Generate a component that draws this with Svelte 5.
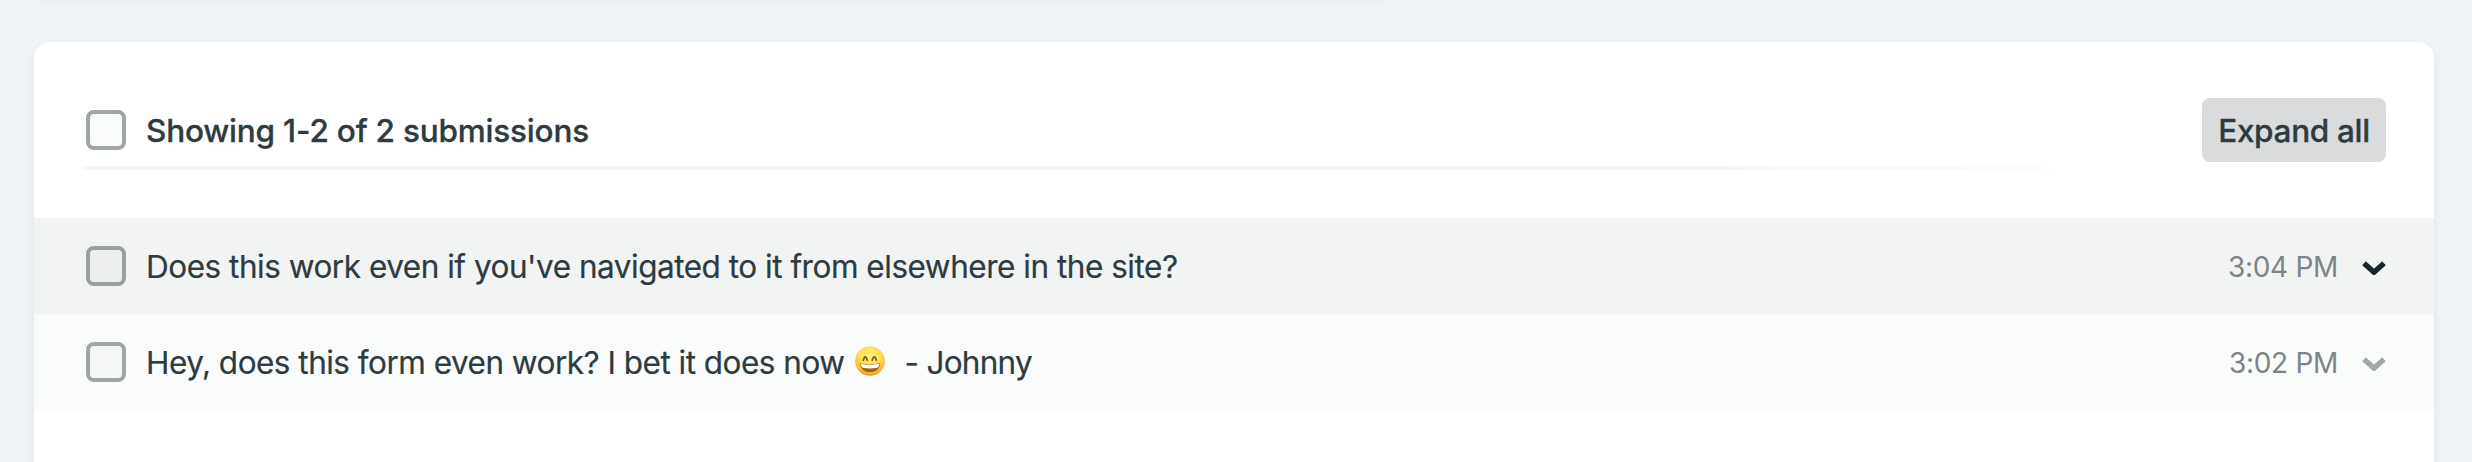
<script>
  const submissions = [
    { id: 1, before: "Does this work even if you've navigated to it from elsewhere in the site?", time: '3:04 PM', active: true },
    { id: 2, before: 'Hey, does this form even work? I bet it does now', after: '- Johnny', smile: true, time: '3:02 PM', active: false }
  ];
</script>

<div class="page">
  <div class="toolbar-card"></div>
  <section class="card">
    <header>
      <span class="box"></span>
      <h1>Showing 1-2 of 2 submissions</h1>
      <button>Expand all</button>
    </header>
    <div class="rule"></div>
    <div class="list">
      {#each submissions as s (s.id)}
        <div class="row" class:active={s.active}>
          <span class="box"></span>
          <p class:tight={s.smile}>
            <span>{s.before}</span>
            {#if s.smile}
              <svg class="emoji" viewBox="0 0 30 30" role="img" aria-label="Grinning face with smiling eyes">
                <defs>
                  <radialGradient id="face" cx="50%" cy="32%" r="68%">
                    <stop offset="0" stop-color="#fff27a" />
                    <stop offset=".55" stop-color="#ffdc4c" />
                    <stop offset=".85" stop-color="#fbb52d" />
                    <stop offset="1" stop-color="#ee9420" />
                  </radialGradient>
                </defs>
                <circle cx="15" cy="15" r="14.8" fill="url(#face)" />
                <path d="M8.3 14.2Q10.2 7.4 12.3 14.2M17.2 14.2Q19.3 7.4 21.4 14.2" fill="none" stroke="#80551c" stroke-width="1.7" stroke-linecap="round" />
                <path d="M5 17.3Q15 19.5 25 17.3Q24.3 26.3 15 26.3Q5.7 26.3 5 17.3Z" fill="#9c6615" />
                <path d="M5.8 17.8Q15 20 24.2 17.8Q24 21.8 21.4 22Q15 22.9 8.6 22Q6 21.8 5.8 17.8Z" fill="#fff" />
              </svg>
              <span class="after">{s.after}</span>
            {/if}
          </p>
          <time>{s.time}</time>
          <svg class="chevron" viewBox="0 0 24 14"><path d="M2 2.3L12 11.2L22 2.3" fill="none" stroke="currentColor" stroke-width="5.4" /></svg>
        </div>
      {/each}
    </div>
  </section>
</div>

<style>
  :global(body) { background: #f0f4f7; }
  .page {
    height: 462px;
    overflow: hidden;
    box-sizing: border-box;
    padding: 0 38px 0 34px;
    font-family: Inter, "Liberation Sans", sans-serif;
    color: #2e3b40;
    background: #f0f4f7;
  }
  .toolbar-card {
    width: 1354px;
    height: 20px;
    margin-top: -22px;
    margin-bottom: 44px;
    border-radius: 16px;
    background: #fff;
    box-shadow: 0 2px 6px rgba(20, 40, 50, 0.07);
  }
  .card {
    height: 500px;
    border-radius: 16px;
    background: #fff;
    box-shadow: 0 4px 8px rgba(20, 40, 50, 0.08);
  }
  header {
    display: flex;
    align-items: center;
    height: 68px;
    padding: 54px 48px 2px 52px;
  }
  .box {
    flex: none;
    box-sizing: border-box;
    width: 40px;
    height: 40px;
    border: 4px solid #9fa6a9;
    border-radius: 8px;
    background: #fafcfb;
  }
  h1 {
    margin: 0 0 0 20px;
    padding-top: 2px;
    font-size: 31.5px;
    line-height: 40px;
    font-weight: 500;
    letter-spacing: -0.2px;
    white-space: nowrap;
    -webkit-text-stroke: 0.3px currentColor;
  }
  button {
    box-sizing: border-box;
    width: 184px;
    height: 64px;
    margin-left: auto;
    padding: 1px 0 0;
    border: 0;
    border-radius: 8px;
    background: #dadbdd;
    color: #2e3b40;
    font: 500 31.5px/62px Inter, "Liberation Sans", sans-serif;
    letter-spacing: -0.32px;
    white-space: nowrap;
    -webkit-text-stroke: 0.3px currentColor;
  }
  .rule {
    height: 4px;
    margin: 0 48px;
    background: linear-gradient(90deg, #f4f6f9 0%, #f4f6f9 70%, #fff 91%);
  }
  .list { padding-top: 48px; }
  .row {
    display: flex;
    align-items: center;
    height: 96px;
    box-sizing: border-box;
    padding: 0 48px 0 52px;
    background: #fafcfb;
  }
  .row.active { background: #f2f4f4; }
  .row .box { background: #f5f7f6; }
  .row.active .box { background: #edefee; border-color: #999fa2; }
  p {
    display: flex;
    align-items: center;
    margin: 0 auto 0 20px;
    padding-top: 2px;
    font-size: 31.5px;
    line-height: 40px;
    letter-spacing: -0.48px;
    white-space: nowrap;
    -webkit-text-stroke: 0.2px currentColor;
  }
  .tight { letter-spacing: -0.51px; }
  .after { letter-spacing: -0.72px; }
  .emoji {
    width: 30px;
    height: 30px;
    margin: 0 19px 5px 11px;
  }
  time {
    margin-right: 24px;
    padding-top: 1px;
    color: #7d8487;
    font-size: 28px;
    line-height: 40px;
    letter-spacing: -0.3px;
  }
  .chevron {
    width: 24px;
    height: 14px;
    margin-top: 4px;
    color: #a2a9ac;
  }
  .active .chevron { color: #16262d; }
</style>
